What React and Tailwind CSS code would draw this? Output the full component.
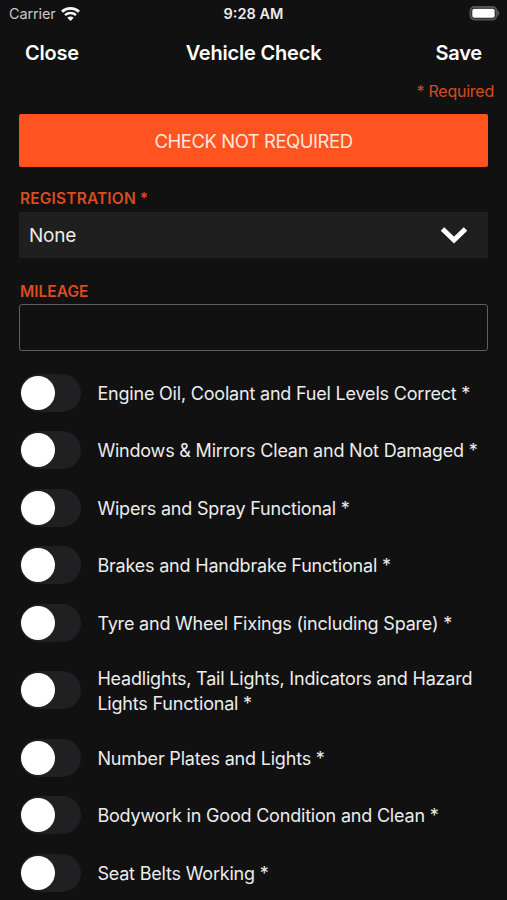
import React, { useState } from "react";

const checks = [
  "Engine Oil, Coolant and Fuel Levels Correct *",
  "Windows & Mirrors Clean and Not Damaged *",
  "Wipers and Spray Functional *",
  "Brakes and Handbrake Functional *",
  "Tyre and Wheel Fixings (including Spare) *",
  "Headlights, Tail Lights, Indicators and Hazard Lights Functional *",
  "Number Plates and Lights *",
  "Bodywork in Good Condition and Clean *",
  "Seat Belts Working *",
];

const WifiIcon = () => (
  <svg width="19" height="15" viewBox="0 0 19 15" fill="none">
    <path d="M1 4.8C5.6 .3 13.4 .3 18 4.8" stroke="#f4f4f4" strokeWidth="2.7" />
    <path d="M4 8.2C7 5.4 12 5.4 15 8.2" stroke="#f4f4f4" strokeWidth="2.5" />
    <path d="M9.5 13.9 6.3 10.7C8.1 9.1 10.9 9.1 12.7 10.7Z" fill="#f4f4f4" />
  </svg>
);

const BatteryIcon = () => (
  <svg width="32" height="16" viewBox="0 0 32 16" fill="none">
    <rect x="2.5" y="1" width="26" height="12.4" rx="3.8" stroke="#555555" strokeWidth="2" />
    <rect x="4.3" y="2.7" width="22.4" height="9" rx="1.8" fill="#fff" />
    <path d="M29.4 4.6C31.8 6 31.8 8.9 29.4 10.2Z" fill="#5c5c5c" />
  </svg>
);

const Toggle = ({ checked, onChange }) => (
  <button
    type="button"
    role="switch"
    aria-checked={checked}
    onClick={onChange}
    className={`flex h-[38px] w-[61px] shrink-0 items-center rounded-full px-px ${
      checked ? "justify-end bg-[#ff541f]" : "justify-start bg-[#202022]"
    }`}
  >
    <span className="size-[34px] rounded-full bg-white" />
  </button>
);

const App = () => {
  const [values, setValues] = useState({});
  const [mileage, setMileage] = useState("");

  return (
    <div className="h-[900px] w-full overflow-hidden bg-[#111111] font-[Inter,sans-serif] text-[#ececec]">
      {/* Status bar */}
      <div className="grid h-7 grid-cols-3 items-center pr-[7px] pl-[9px]">
        <div className="flex items-center gap-[5px] text-[14.5px] tracking-[-0.01em] text-[#c8c8c8]">
          <span>Carrier</span>
          <WifiIcon />
        </div>
        <span className="pr-[2px] text-center text-[14.5px] font-semibold">9:28 AM</span>
        <div className="flex justify-end">
          <BatteryIcon />
        </div>
      </div>

      {/* Nav bar */}
      <div className="grid h-[49px] grid-cols-3 items-center px-[25px] text-[20px] font-semibold tracking-[-0.01em] text-white">
        <button type="button" className="text-left">Close</button>
        <h1 className="text-center whitespace-nowrap">Vehicle Check</h1>
        <button type="button" className="text-right">Save</button>
      </div>

      <p className="h-[37px] pt-[2px] pr-[13px] text-right text-[16px] leading-6 tracking-[-0.015em] text-[#d74b20]">
        * Required
      </p>

      <div className="px-[19px]">
        <button
          type="button"
          className="block h-[53px] w-full rounded-[2px] bg-[#ff541f] pt-[2px] text-[18.5px] tracking-[-0.025em] text-[#ffe6dc]"
        >
          CHECK NOT REQUIRED
        </button>

        <label className="mt-[22px] block h-[23px] pl-px text-[15.5px] leading-5 font-semibold tracking-[0.01em] text-[#d94c20]">
          REGISTRATION *
        </label>
        <button
          type="button"
          className="flex h-[46px] w-full items-center justify-between bg-[#1f1f1f] pr-5 pl-[10px] text-[19px]"
        >
          <span className="pt-[2px] tracking-[-0.01em]">None</span>
          <svg width="28" height="18" viewBox="0 0 28 18" fill="none">
            <path d="M2.5 3 14 14 25.5 3" stroke="#fff" strokeWidth="5" />
          </svg>
        </button>

        <label
          htmlFor="mileage"
          className="mt-[23px] block h-[23px] pt-px pl-px text-[15.5px] leading-5 font-semibold text-[#d94c20]"
        >
          MILEAGE
        </label>
        <input
          id="mileage"
          value={mileage}
          onChange={(e) => setMileage(e.target.value)}
          className="block h-[47px] w-full rounded-[3px] border border-[#5e5e5e] bg-transparent px-[10px] text-[19px] outline-none"
        />
      </div>

      {/* Checklist */}
      <div className="mt-[13px] pr-4 pl-[20.4px]">
        {checks.map((label) => (
          <div key={label} className="flex min-h-[57.5px] items-center gap-4 py-[9.5px]">
            <Toggle
              checked={!!values[label]}
              onChange={() => setValues({ ...values, [label]: !values[label] })}
            />
            <span className="pt-[6px] pb-[3px] text-[18px] leading-[24.7px] tracking-[-0.011em]">{label}</span>
          </div>
        ))}
      </div>
    </div>
  );
};

export default App;
